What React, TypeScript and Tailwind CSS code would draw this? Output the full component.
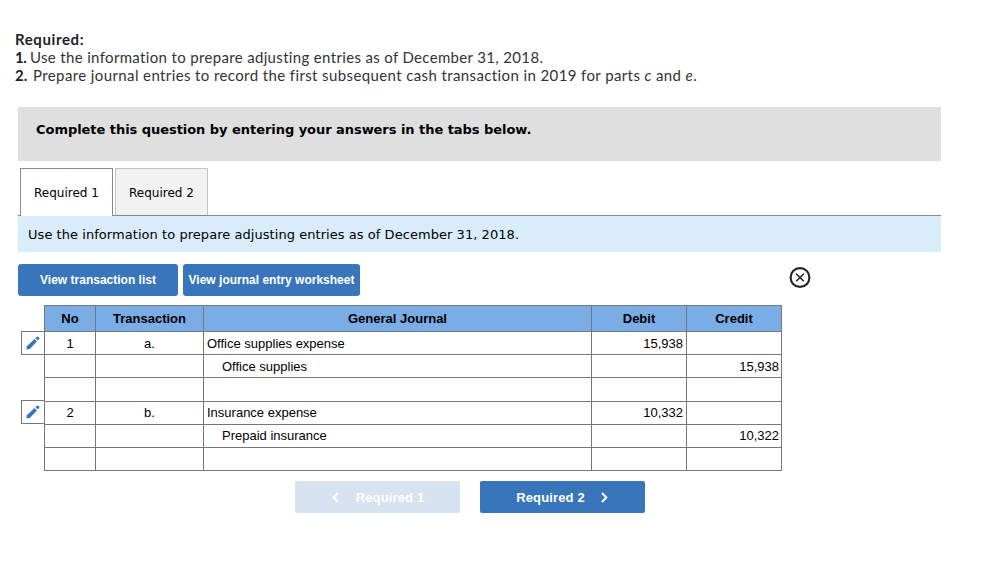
import React from 'react';

const columns = ['No', 'Transaction', 'General Journal', 'Debit', 'Credit'];

const rows = [
  { no: '1', transaction: 'a.', account: 'Office supplies expense', debit: '15,938', credit: '' },
  { no: '', transaction: '', account: 'Office supplies', indent: true, debit: '', credit: '15,938' },
  { no: '', transaction: '', account: '', debit: '', credit: '' },
  { no: '2', transaction: 'b.', account: 'Insurance expense', debit: '10,332', credit: '' },
  { no: '', transaction: '', account: 'Prepaid insurance', indent: true, debit: '', credit: '10,322' },
  { no: '', transaction: '', account: '', debit: '', credit: '' },
];

const PencilIcon = () => (
  <svg width="14" height="14" viewBox="0 0 14 14" fill="#3975ba">
    <path d="M0.4 13.6 L0.9 10.2 L8.4 2.9 L11 5.5 L3.8 13 Z" />
    <path d="M9.3 2.1 L10.8 0.7 Q11.6 0.2 12.4 0.9 L13.1 1.6 Q13.8 2.4 13.2 3.1 L11.9 4.6 Z" />
  </svg>
);

const EditButton = () => (
  <button className="flex h-6 w-[23px] items-center justify-center border border-r-0 border-[#777] bg-white">
    <PencilIcon />
  </button>
);

const JournalTable = () => {
  const cell = 'border-l border-t border-[#777]';

  return (
    <div className="flex pl-[21px] font-['Liberation_Sans',sans-serif] text-[13px] text-black">
      {/* Edit buttons */}
      <div className="flex flex-col gap-[45px] pt-[26px]">
        <EditButton />
        <EditButton />
      </div>

      {/* Journal */}
      <div className="grid grid-cols-[51px_108px_388px_95px_95px] grid-rows-[26px_23px_23px_24px_23px_23px_23px] border-b border-r border-[#777]">
        {columns.map((column) => (
          <div key={column} className={`${cell} bg-[#7aace6] text-center font-bold leading-[25px]`}>
            {column}
          </div>
        ))}
        {rows.map((row, index) => {
          const leading = index < 3 ? 'leading-[23px]' : 'leading-[21px]';
          return (
            <React.Fragment key={index}>
              <div className={`${cell} ${leading} text-center`}>{row.no}</div>
              <div className={`${cell} ${leading} text-center`}>{row.transaction}</div>
              <div className={`${cell} ${leading} ${row.indent ? 'pl-[18px]' : 'pl-[3px]'}`}>{row.account}</div>
              <div className={`${cell} ${leading} pr-[3px] text-right`}>{row.debit}</div>
              <div className={`${cell} ${leading} pr-[2px] text-right`}>{row.credit}</div>
            </React.Fragment>
          );
        })}
      </div>
    </div>
  );
};

const App = () => {
  return (
    <div className="h-[579px] w-[982px] overflow-hidden bg-white pt-[30px]">
      {/* Instructions */}
      <div className="h-[77px] whitespace-nowrap pl-[15px] font-['Lato',sans-serif] text-[15px] leading-[18px] text-[#333]">
        <p className="font-bold tracking-[0.6px] text-[#222]">Required:</p>
        <p className="flex">
          <b className="w-[15px] tracking-[-0.5px] text-[#222]">1.</b>
          <span className="tracking-[0.34px]">Use the information to prepare adjusting entries as of December 31, 2018.</span>
        </p>
        <p className="flex">
          <b className="w-[18px] text-[#222]">2.</b>
          <span className="tracking-[0.39px]">
            Prepare journal entries to record the first subsequent cash transaction in 2019 for parts <i>c</i> and{' '}
            <i>e</i>.
          </span>
        </p>
      </div>

      <div className="ml-[18px] w-[923px] font-['DejaVu_Sans',sans-serif] text-[13px] text-black">
        <div className="h-[54px] bg-[#dfdfdf] pl-[18px] font-bold leading-[45px] tracking-[-0.045px]">
          Complete this question by entering your answers in the tabs below.
        </div>

        {/* Tabs */}
        <div className="mt-[7px] flex h-12 border-b border-[#8a8a8a] pl-[2px] text-xs">
          <div className="h-12 w-[93px] border border-b-0 border-[#8a8a8a] bg-white text-center leading-[48px]">
            Required 1
          </div>
          <div className="ml-[2px] h-[47px] w-[93px] border border-b-0 border-[#c3c3c3] bg-[#f2f2f2] text-center leading-[48px]">
            Required 2
          </div>
        </div>
        <div className="h-9 bg-[#d9ecfa] pl-[10px] leading-[37px] tracking-[0.05px]">
          Use the information to prepare adjusting entries as of December 31, 2018.
        </div>
      </div>

      {/* Toolbar */}
      <div className="mt-3 flex h-[41px] w-[811px] items-start gap-[5px] pl-[18px] font-['Liberation_Sans',sans-serif] text-xs font-bold text-white">
        <button className="h-8 w-40 rounded-[3px] bg-[#3975ba]">View transaction list</button>
        <button className="h-8 w-[177px] whitespace-nowrap rounded-[3px] bg-[#3975ba]">View journal entry worksheet</button>
        <button className="ml-auto mt-[3px]">
          <svg width="22" height="21" viewBox="0 0 22 21" fill="none" stroke="#222">
            <circle cx="11" cy="10.5" r="9.4" strokeWidth="2.1" />
            <path d="M7.2 6.7 L14.8 14.3 M14.8 6.7 L7.2 14.3" strokeWidth="1.5" />
          </svg>
        </button>
      </div>

      <JournalTable />

      {/* Navigation */}
      <div className="mt-[10px] flex gap-5 pl-[295px] font-['Liberation_Sans',sans-serif] text-[13px] font-bold tracking-[0.15px] text-white">
        <button className="flex h-8 w-[165px] items-center justify-center gap-[17px] rounded-[2px] bg-[#d8e3f1] pl-px pt-px">
          <svg width="7" height="11" viewBox="0 0 7 11" fill="none" stroke="currentColor" strokeWidth="2">
            <path d="M6 1 L1.7 5.5 L6 10" />
          </svg>
          Required 1
        </button>
        <button className="flex h-8 w-[165px] items-center justify-center gap-4 rounded-[2px] bg-[#3975ba] pr-px pt-px">
          Required 2
          <svg width="7" height="11" viewBox="0 0 7 11" fill="none" stroke="currentColor" strokeWidth="2">
            <path d="M1 1 L5.3 5.5 L1 10" />
          </svg>
        </button>
      </div>
    </div>
  );
};

export default App;
